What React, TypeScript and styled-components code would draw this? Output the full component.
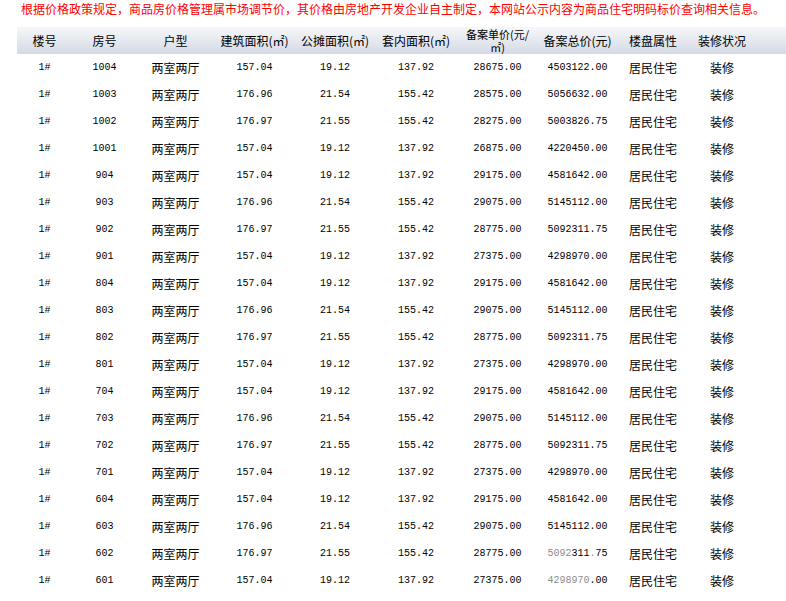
import styled, { createGlobalStyle } from "styled-components";

const GlobalStyle = createGlobalStyle`
  body {
    margin: 0;
    background: #ffffff;
    font-family: "Noto Sans CJK SC", "Noto Sans", sans-serif;
  }
`;

type Part = { text: string; faded?: boolean };
type RowType = {
  room: string;
  area: string;
  shared: string;
  inner: string;
  unit: string;
  total: Part[];
};

const plans = [
  { area: "157.04", shared: "19.12", inner: "137.92" },
  { area: "176.96", shared: "21.54", inner: "155.42" },
  { area: "176.97", shared: "21.55", inner: "155.42" },
];

const rows: RowType[] = [
  { room: "1004", ...plans[0], unit: "28675.00", total: [{ text: "4503122.00" }] },
  { room: "1003", ...plans[1], unit: "28575.00", total: [{ text: "5056632.00" }] },
  { room: "1002", ...plans[2], unit: "28275.00", total: [{ text: "5003826.75" }] },
  { room: "1001", ...plans[0], unit: "26875.00", total: [{ text: "4220450.00" }] },
];

["9", "8", "7", "6"].forEach((floor) => {
  const last = floor === "6";
  rows.push(
    { room: floor + "04", ...plans[0], unit: "29175.00", total: [{ text: "4581642.00" }] },
    { room: floor + "03", ...plans[1], unit: "29075.00", total: [{ text: "5145112.00" }] },
    {
      room: floor + "02",
      ...plans[2],
      unit: "28775.00",
      total: last
        ? [
            { text: "5092", faded: true },
            { text: "311" },
            { text: ".", faded: true },
            { text: "75" },
          ]
        : [{ text: "5092311.75" }],
    },
    {
      room: floor + "01",
      ...plans[0],
      unit: "27375.00",
      total: last
        ? [{ text: "4298970", faded: true }, { text: ".00" }]
        : [{ text: "4298970.00" }],
    }
  );
});

const App = () => {
  return (
    <Page>
      <GlobalStyle />
      <Notice>
        根据价格政策规定，商品房价格管理属市场调节价，其价格由房地产开发企业自主制定，本网站公示内容为商品住宅明码标价查询相关信息。
      </Notice>
      <Table>
        <HeadRow>
          <HeadCell>楼号</HeadCell>
          <HeadCell>房号</HeadCell>
          <HeadCell>户型</HeadCell>
          <HeadCell>建筑面积(㎡)</HeadCell>
          <HeadCell>公摊面积(㎡)</HeadCell>
          <HeadCell>套内面积(㎡)</HeadCell>
          <HeadCell $tight>
            <HeadLine>备案单价(元/</HeadLine>
            <HeadLine>㎡)</HeadLine>
          </HeadCell>
          <HeadCell>备案总价(元)</HeadCell>
          <HeadCell>楼盘属性</HeadCell>
          <HeadCell>装修状况</HeadCell>
          <HeadCell />
        </HeadRow>
        {rows.map((r) => (
          <Row key={r.room}>
            <NumCell>1#</NumCell>
            <NumCell>{r.room}</NumCell>
            <TextCell>两室两厅</TextCell>
            <NumCell>{r.area}</NumCell>
            <NumCell>{r.shared}</NumCell>
            <NumCell>{r.inner}</NumCell>
            <NumCell>{r.unit}</NumCell>
            <NumCell>
              {r.total.map((p, i) => (
                <Digits key={i} $faded={p.faded}>
                  {p.text}
                </Digits>
              ))}
            </NumCell>
            <TextCell>居民住宅</TextCell>
            <TextCell>装修</TextCell>
            <TextCell />
          </Row>
        ))}
      </Table>
    </Page>
  );
};

export default App;

const Page = styled.div`
  width: 786px;
  height: 601px;
  overflow: hidden;
`;

const Notice = styled.p`
  margin: 0;
  height: 27px;
  padding-left: 21px;
  color: #ff0000;
  font-size: 12px;
  line-height: 18px;
  white-space: nowrap;
`;

const Table = styled.div`
  margin-left: 17px;
`;

const columns = "55px 65px 77px 81px 80px 82px 81px 79px 72px 66px 1fr";

const HeadRow = styled.div`
  display: grid;
  grid-template-columns: ${columns};
  height: 27px;
  background: linear-gradient(#f6f7fa, #d5dae5);
`;

const HeadCell = styled.div<{ $tight?: boolean }>`
  display: flex;
  flex-direction: ${(p) => (p.$tight ? "column" : "row")};
  align-items: center;
  justify-content: center;
  text-align: center;
  color: #000000;
  font-size: 12px;
  line-height: 16px;
  white-space: nowrap;
`;

const HeadLine = styled.span`
  display: block;
  height: 13px;
  font-size: 11px;
  line-height: 13px;
  overflow: visible;
`;

const Row = styled.div`
  display: grid;
  grid-template-columns: ${columns};
  height: 27px;
`;

const Cell = styled.div`
  display: flex;
  align-items: center;
  justify-content: center;
  color: #000000;
  white-space: nowrap;
`;

const NumCell = styled(Cell)`
  font-family: "Liberation Mono", "DejaVu Sans Mono", monospace;
  font-size: 10px;
`;

const TextCell = styled(Cell)`
  font-size: 12px;
`;

const Digits = styled.span<{ $faded?: boolean }>`
  color: ${(p) => (p.$faded ? "#8c8c8c" : "#000000")};
`;
